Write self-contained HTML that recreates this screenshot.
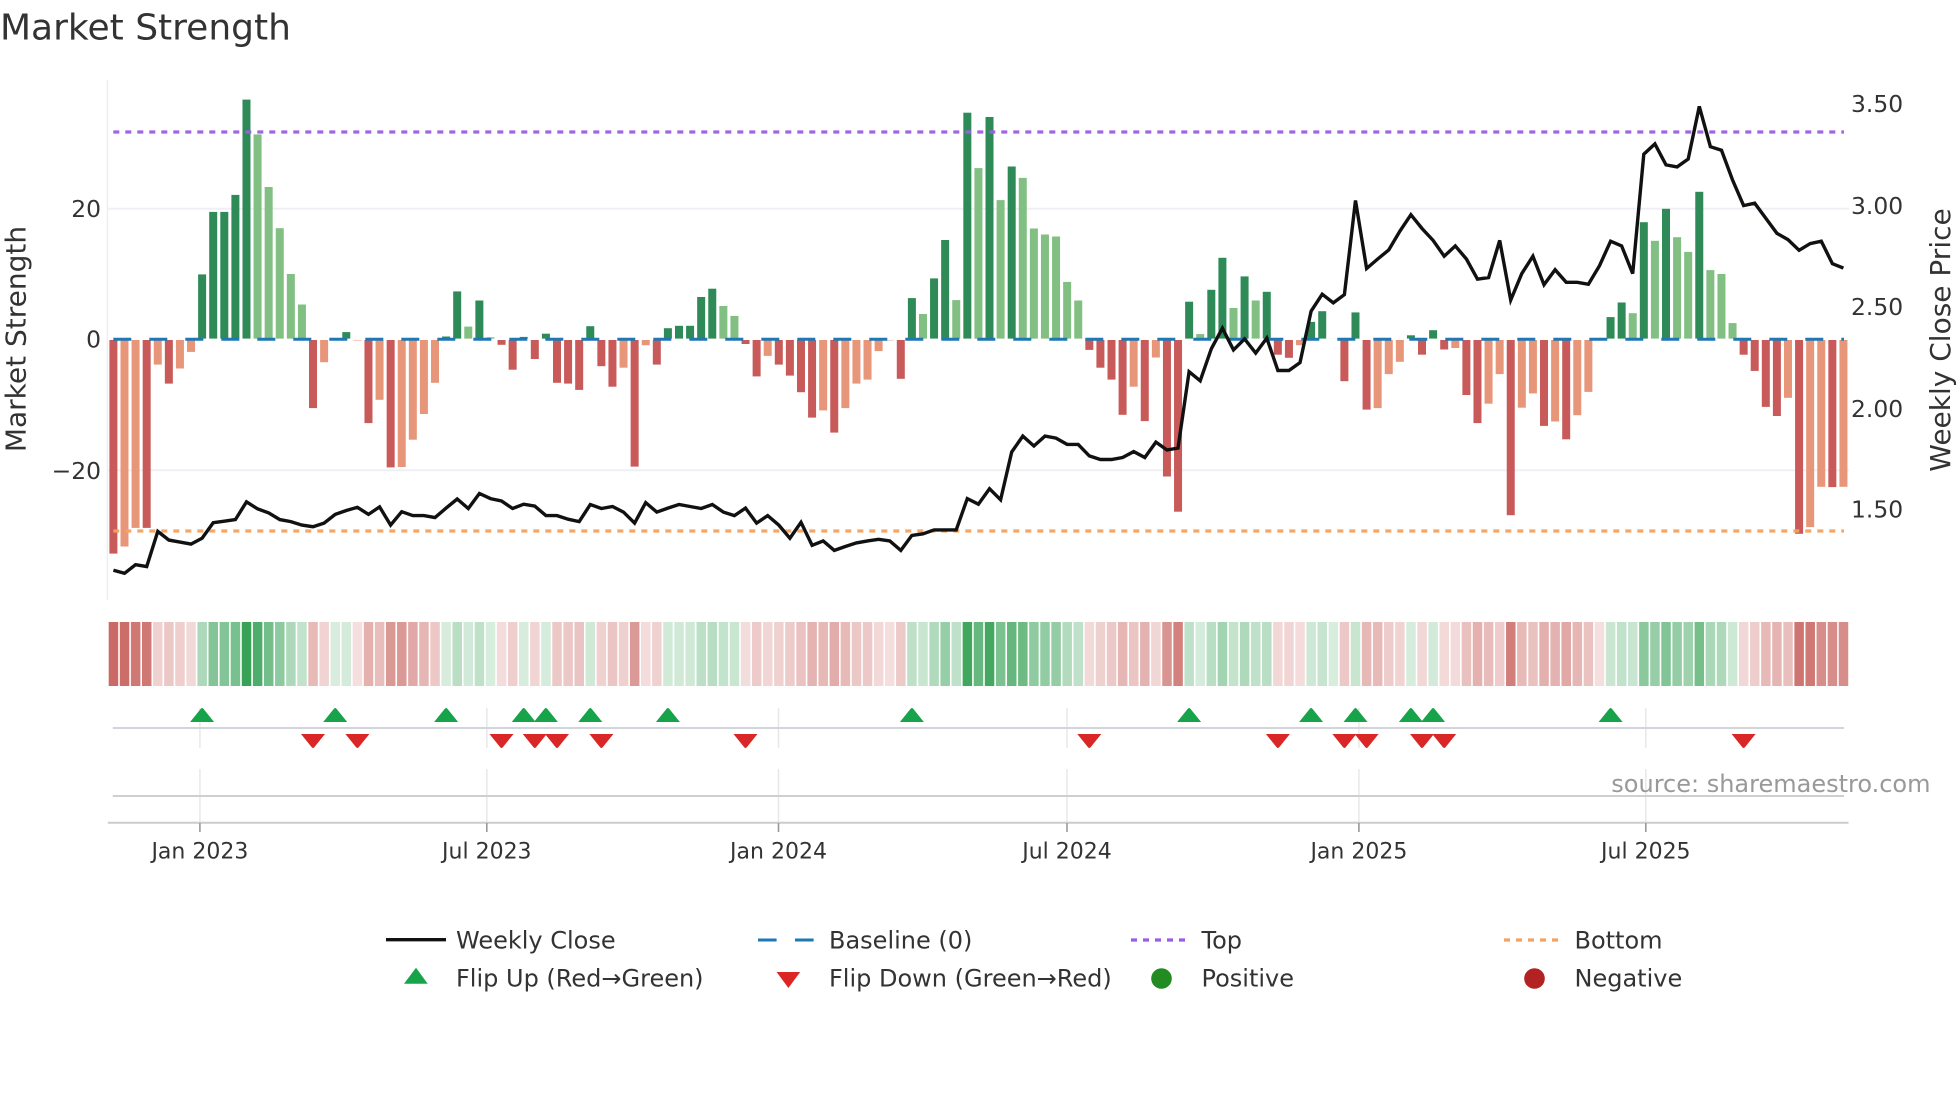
<!DOCTYPE html>
<html><head><meta charset="utf-8"><title>Market Strength</title>
<style>
html,body{margin:0;padding:0;background:#fff;width:1960px;height:1102px;overflow:hidden}
svg{display:block}
text{font-family:"DejaVu Sans","Liberation Sans",sans-serif;fill:#333}
.t{font-size:23.4px}.x{font-size:22px;text-anchor:middle}.l{font-size:24px}
</style></head><body>
<svg id="s" xmlns="http://www.w3.org/2000/svg" width="1960" height="1102" viewBox="0 0 1960 1102">
<rect width="1960" height="1102" fill="#fff"/>
<text x="0" y="39.5" style="font-size:36px">Market Strength</text>
<path d="M107.4 80V600" stroke="#eee" stroke-width="1.5" fill="none"/>
<path d="M107.4 208.8H1849M107.4 470.3H1849" stroke="#eef0f6" stroke-width="2" fill="none"/>
<g id="bars"></g>
<path d="M113.3 339.3H1844" stroke="#1f77b4" stroke-width="3" stroke-dasharray="18 18" fill="none"/>
<path d="M113.3 132H1844" stroke="#9b5de5" stroke-width="3.2" stroke-dasharray="6 6" fill="none" opacity=".95"/>
<path d="M113.3 531H1844" stroke="#f4a261" stroke-width="3.2" stroke-dasharray="6 6" fill="none" opacity=".95"/>
<polyline id="line" fill="none" stroke="#111" stroke-width="3.4" stroke-linejoin="miter" points=""/>
<text class="t" x="101" y="217.2" text-anchor="end">20</text>
<text class="t" x="101" y="347.7" text-anchor="end">0</text>
<text class="t" x="101" y="478.9" text-anchor="end">−20</text>
<text class="t" x="1851" y="112">3.50</text>
<text class="t" x="1851" y="214">3.00</text>
<text class="t" x="1851" y="315.2">2.50</text>
<text class="t" x="1851" y="416.9">2.00</text>
<text class="t" x="1851" y="517.7">1.50</text>
<text transform="translate(25.5 339) rotate(-90)" text-anchor="middle" style="font-size:28px">Market Strength</text>
<text transform="translate(1950 340) rotate(-90)" text-anchor="middle" style="font-size:28px">Weekly Close Price</text>
<g id="heat"></g>
<path d="M199.9 708V748M199.9 769V823M486.8 708V748M486.8 769V823M778.5 708V748M778.5 769V823M1067 708V748M1067 769V823M1358.9 708V748M1358.9 769V823M1645.8 708V748M1645.8 769V823" stroke="#e8e8ec" stroke-width="1.5" fill="none"/>
<path d="M112.8 728H1844" stroke="#d1d5db" stroke-width="2" fill="none"/>
<path d="M112.8 796H1844" stroke="#cfcfcf" stroke-width="2" fill="none"/>
<path d="M107.8 822.7H1848.5" stroke="#ccc" stroke-width="2" fill="none"/>
<path d="M199.9 823V832M486.8 823V832M778.5 823V832M1067 823V832M1358.9 823V832M1645.8 823V832" stroke="#999" stroke-width="1.6" fill="none"/>
<g id="flips"></g>
<text class="x" x="199.9" y="858.7">Jan 2023</text>
<text class="x" x="486.8" y="858.7">Jul 2023</text>
<text class="x" x="778.5" y="858.7">Jan 2024</text>
<text class="x" x="1067" y="858.7">Jul 2024</text>
<text class="x" x="1358.9" y="858.7">Jan 2025</text>
<text class="x" x="1645.8" y="858.7">Jul 2025</text>
<text x="1930.5" y="792.2" text-anchor="end" style="font-size:24px;fill:#999">source: sharemaestro.com</text>
<path d="M386 939.7H446" stroke="#111" stroke-width="3.4" fill="none"/>
<text class="l" x="456" y="948.5">Weekly Close</text>
<path d="M758 940H776.6M795 940H813.6" stroke="#1f77b4" stroke-width="3" fill="none"/>
<text class="l" x="829" y="948.5">Baseline (0)</text>
<path d="M1131 940H1187" stroke="#9b5de5" stroke-width="3.2" stroke-dasharray="6 6" fill="none"/>
<text class="l" x="1201.5" y="948.5">Top</text>
<path d="M1504 940H1560" stroke="#f4a261" stroke-width="3.2" stroke-dasharray="6 6" fill="none"/>
<text class="l" x="1574.5" y="948.5">Bottom</text>
<path d="M416 967.7L427.7 983.7H404Z" fill="#16a34a"/>
<text class="l" x="456" y="986.5">Flip Up (Red→Green)</text>
<path d="M788.4 988L776.6 972H800.2Z" fill="#dc2626"/>
<text class="l" x="829" y="986.5">Flip Down (Green→Red)</text>
<circle cx="1161.5" cy="978.5" r="10.3" fill="#228b22"/>
<text class="l" x="1201.5" y="986.5">Positive</text>
<circle cx="1534.5" cy="978.5" r="10.3" fill="#b22222"/>
<text class="l" x="1574.5" y="986.5">Negative</text>
</svg>
<script>
var B="D1400 L1382 L1335 D1335 L922 D970 L932 L890 G694 G536 G536 G493 G252 H340 H473 H577 H693 H770 D1032 L916 H858 G840 L861 D1070 L1011 D1182 L1181 L1112 L1047 L968 G851 G737 H826 G760 H853 D872 D935 G852 D908 G844 D968 D970 D986 G825 D926 D978 L930 D1180 L873 D922 G830 G824 G824 G751 G730 H774 H799 D870 D952 L900 D922 D950 D992 D1056 L1038 D1094 L1032 L970 L960 L888 L860 D958 G754 H794 G704 G607 H759 G285 H425 G296 H506 G421 H450 H578 H593 H598 H713 H760 D885 D930 D960 D1049 L978 D1065 L904 D1205 D1294 G763 H845 G733 G652 H779 G699 H760 G738 D897 D905 L873 G814 G787 H856 D964 G790 D1036 L1032 L946 L915 G848 D897 G835 D884 L880 D999 D1070 L1021 L946 D1303 L1031 L995 D1077 L1066 D1111 L1050 L991 L860 G802 G765 H792 G562 H609 G528 H600 H637 G485 H683 H693 H817 D897 D938 D1029 D1052 L1006 D1350 L1333 L1231 D1232 L1231".split(" ");
var P=[1442,1450,1428,1433,1344,1366,1371,1376,1361,1322,1318,1314,1269,1287,1297,1314,1319,1328,1332,1323,1301,1291,1283,1301,1282,1328,1294,1304,1304,1309,1285,1262,1286,1248,1261,1267,1286,1275,1280,1304,1304,1313,1319,1276,1286,1281,1295,1323,1271,1295,1285,1276,1281,1286,1276,1295,1304,1285,1323,1304,1328,1361,1321,1379,1368,1392,1382,1373,1368,1364,1368,1392,1354,1350,1340,1340,1340,1261,1275,1236,1264,1143,1103,1128,1103,1108,1124,1124,1153,1162,1162,1157,1142,1157,1118,1138,1133,940,963,882,830,885,857,893,855,937,937,917,787,744,766,745,507,679,655,632,585,543,578,608,648,622,655,706,702,608,759,692,648,720,682,714,714,719,672,610,622,692,390,364,417,422,402,269,371,380,455,520,514,552,590,606,633,616,610,667,678];
var C={D:"#c85a5a",L:"#e8967a",G:"#2e8b57",H:"#82bf82"},K=2.529,Z=858,b="",h="",pts=[];
function cx(i){return 113.4+11.09*i}
B.forEach(function(s,i){
 var c=s[0],z=+s.slice(1),x=cx(i),y=z/K,pos=(c=="G"||c=="H"),v;
 if(pos){b+='<rect x="'+(x-4).toFixed(2)+'" y="'+y.toFixed(1)+'" width="8" height="'+Math.max(338.6-y,0).toFixed(1)+'" fill="'+C[c]+'"/>';}
 else{b+='<rect x="'+(x-4).toFixed(2)+'" y="340" width="8" height="'+Math.max(y-340,.4).toFixed(1)+'" fill="'+C[c]+'"/>';}
 v=Math.abs(z-Z)/K/6.53;
 var a=0.17+0.72*v/37,base=pos?[30,150,65]:[190,70,65];
 var col=base.map(function(q){return Math.round(255-(255-q)*a)});
 h+='<rect x="'+(x-4.7).toFixed(2)+'" y="622" width="9.5" height="64" fill="rgb('+col+')"/>';
 pts.push(x.toFixed(1)+","+(P[i]/K).toFixed(1));
});
document.getElementById("bars").innerHTML=b;
document.getElementById("heat").innerHTML=h;
document.getElementById("line").setAttribute("points",pts.join(" "));
var f="";
[8,20,30,37,39,43,50,72,97,108,112,117,119,135].forEach(function(i){var x=cx(i);
 f+='<path d="M'+(x-1.5).toFixed(1)+' 709Q'+x.toFixed(1)+' 707 '+(x+1.5).toFixed(1)+' 709L'+(x+12).toFixed(1)+' 722H'+(x-12).toFixed(1)+'Z" fill="#16a34a"/>';});
[18,22,35,38,40,44,57,88,105,111,113,118,120,147].forEach(function(i){var x=cx(i);
 f+='<path d="M'+(x-12).toFixed(1)+' 734H'+(x+12).toFixed(1)+'L'+(x+1.5).toFixed(1)+' 747Q'+x.toFixed(1)+' 749 '+(x-1.5).toFixed(1)+' 747Z" fill="#d92626"/>';});
document.getElementById("flips").innerHTML=f;
</script>
</body></html>
